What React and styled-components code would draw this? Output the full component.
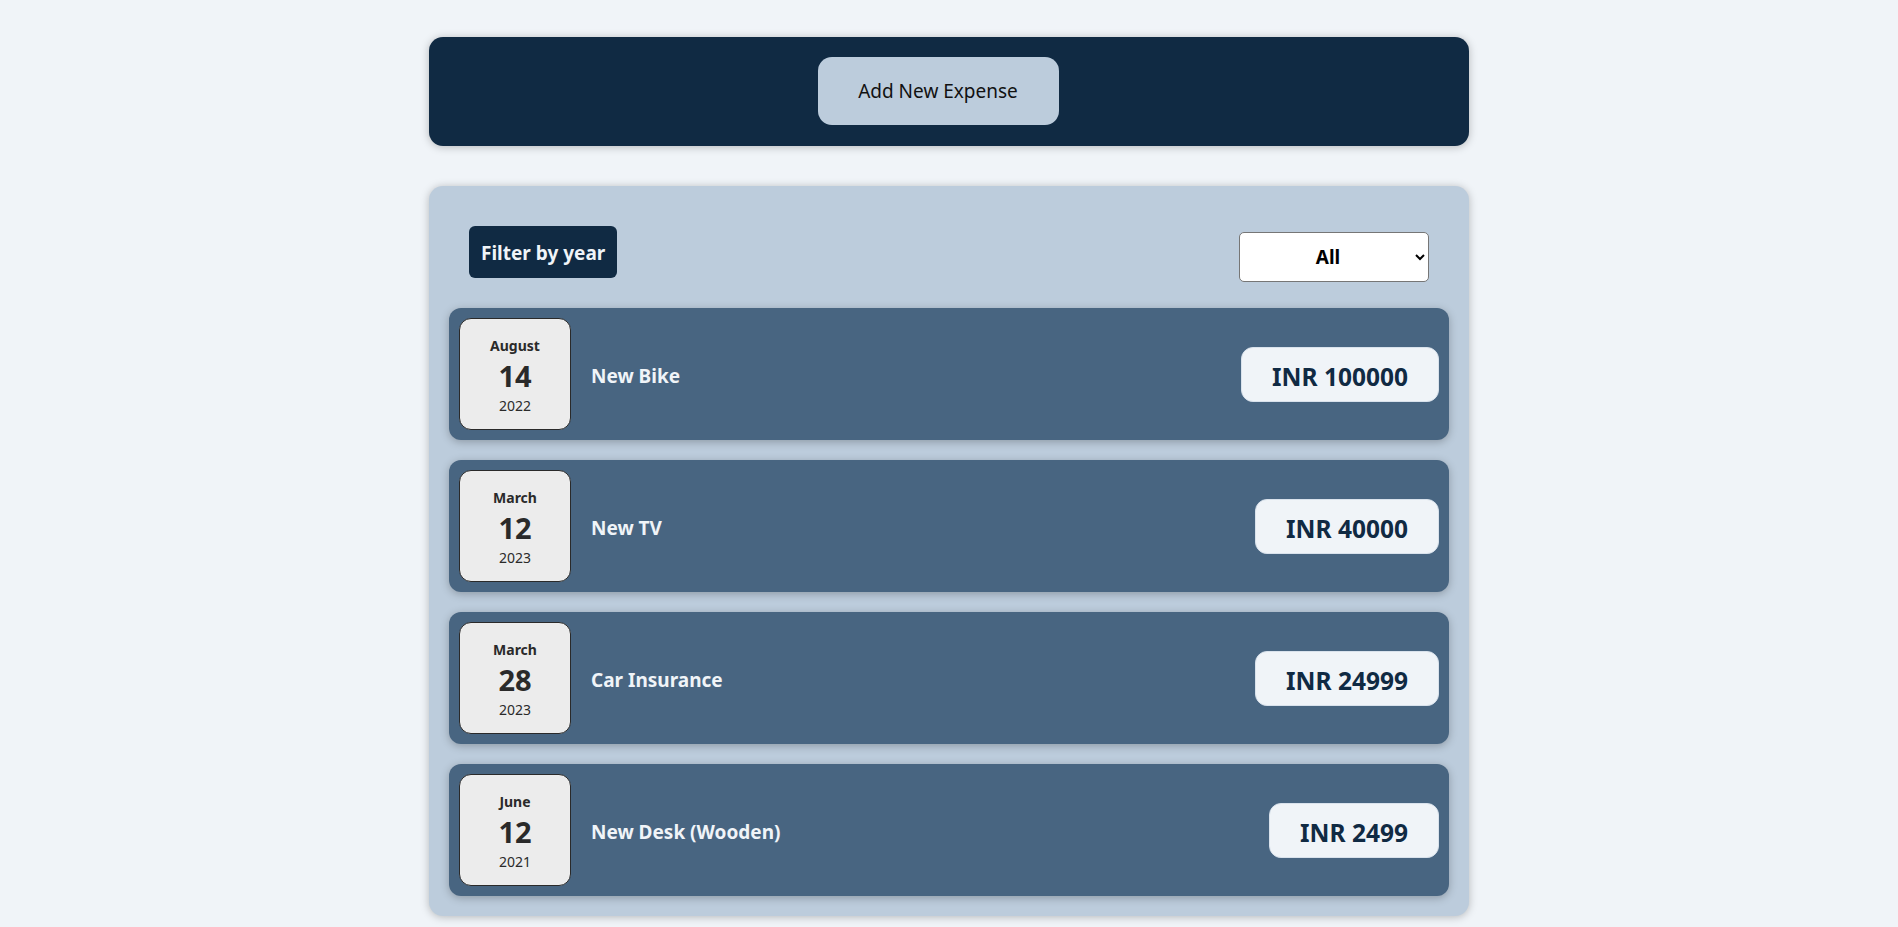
import React, { useState } from 'react';
import styled, { createGlobalStyle } from 'styled-components';

const GlobalStyle = createGlobalStyle`
    * {
        box-sizing: border-box;
    }
    body {
        margin: 0;
        background: #f0f4f8;
        font-family: "Noto Sans", "Open Sans", sans-serif;
    }
`;

const EXPENSES = [
    {id: 'e1', title: 'New Bike', amount: 100000, date: new Date(2022, 7, 14)},
    {id: 'e2', title: 'New TV', amount: 40000, date: new Date(2023, 2, 12)},
    {id: 'e3', title: 'Car Insurance', amount: 24999, date: new Date(2023, 2, 28)},
    {id: 'e4', title: 'New Desk (Wooden)', amount: 2499, date: new Date(2021, 5, 12)},
];

const Card = styled.div`
    width: 1040px;
    margin: ${({top}) => top}px auto 0;
    border-radius: 14px;
    box-shadow: 0 1px 8px rgba(0, 0, 0, 0.25);
`;

const NewExpense = styled(Card)`
    background: #102a43;
    padding: 20px 42px 21px 20px;
    display: flex;
    justify-content: center;
`;

const AddButton = styled.button`
    font-family: inherit;
    font-size: 19px;
    line-height: 28px;
    color: #111;
    background: #bcccdc;
    border: none;
    border-radius: 14px;
    padding: 20px 40px;
    width: 241px;
    height: 68px;
    cursor: pointer;
`;

const Expenses = styled(Card)`
    background: #bcccdc;
    padding: 20px;
    margin-bottom: 20px;
`;

const Filter = styled.div`
    display: flex;
    justify-content: space-between;
    align-items: flex-start;
    padding: 20px 20px 0;
    margin-bottom: 26px;
`;

const FilterLabel = styled.label`
    background: #102a43;
    color: #f0f4f8;
    font-weight: bold;
    font-size: 19px;
    line-height: 28px;
    padding: 13px 12px 11px;
    border-radius: 6px;
`;

const YearSelect = styled.select`
    margin-top: 6px;
    width: 190px;
    height: 50px;
    font-family: inherit;
    font-size: 19px;
    font-weight: bold;
    color: #000;
    background: #fff;
    border: 1px solid #767676;
    border-radius: 5px;
    text-align: center;
    text-align-last: center;
`;

const List = styled.ul`
    list-style: none;
    margin: 0;
    padding: 0;
    display: flex;
    flex-direction: column;
    gap: 20px;
`;

const Item = styled.li`
    display: flex;
    align-items: center;
    background: #486581;
    padding: 10px;
    border-radius: 12px;
    box-shadow: 0 2px 8px rgba(0, 0, 0, 0.25);
`;

const DateBox = styled.div`
    width: 112px;
    height: 112px;
    display: flex;
    flex-direction: column;
    align-items: center;
    justify-content: center;
    padding-top: 3px;
    background: #ececec;
    border: 1px solid #2a2a2a;
    border-radius: 12px;
    color: #2a2a2a;
`;

const Month = styled.div`
    font-size: 14px;
    font-weight: bold;
    line-height: 20px;
`;

const Day = styled.div`
    font-size: 29px;
    font-weight: bold;
    line-height: 40px;
`;

const Year = styled.div`
    font-size: 14px;
    line-height: 20px;
`;

const Title = styled.h2`
    flex: 1;
    margin: 0 20px;
    padding-top: 4px;
    font-size: 19px;
    font-weight: bold;
    color: #f0f4f8;
`;

const Price = styled.div`
    font-size: 24.5px;
    font-weight: bold;
    line-height: 33px;
    color: #102a43;
    background: #f0f4f8;
    border: 1px solid #d9e2ec;
    border-radius: 12px;
    padding: 12px 30px 8px;
`;

const ExpenseDate = ({date}) => (
    <DateBox>
        <Month>{date.toLocaleString('en-US', {month: 'long'})}</Month>
        <Day>{date.getDate()}</Day>
        <Year>{date.getFullYear()}</Year>
    </DateBox>
);

const ExpenseItem = ({title, amount, date}) => (
    <Item>
        <ExpenseDate date={date} />
        <Title>{title}</Title>
        <Price>INR {amount}</Price>
    </Item>
);

export default function App() {
    const [year, setYear] = useState('All');
    const shown = year === 'All'
        ? EXPENSES
        : EXPENSES.filter(e => e.date.getFullYear().toString() === year);

    return (
        <>
            <GlobalStyle />
            <NewExpense top={37}>
                <AddButton>Add New Expense</AddButton>
            </NewExpense>
            <Expenses top={40}>
                <Filter>
                    <FilterLabel>Filter by year</FilterLabel>
                    <YearSelect value={year} onChange={e => setYear(e.target.value)}>
                        <option value="All">All</option>
                        <option value="2023">2023</option>
                        <option value="2022">2022</option>
                        <option value="2021">2021</option>
                    </YearSelect>
                </Filter>
                <List>
                    {shown.map(e => <ExpenseItem key={e.id} {...e} />)}
                </List>
            </Expenses>
        </>
    );
}
